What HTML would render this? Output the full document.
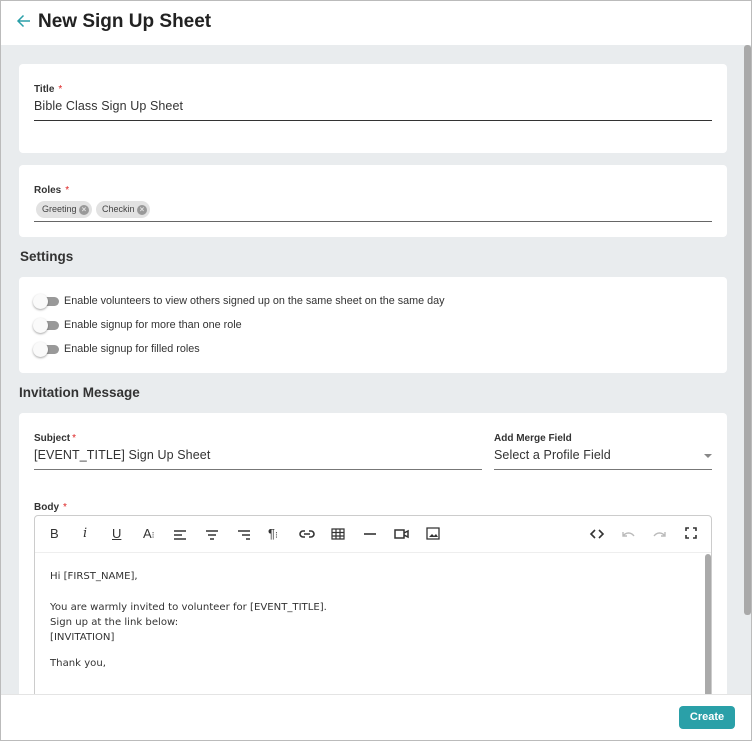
<!DOCTYPE html>
<html><head><meta charset="utf-8"><style>
*{box-sizing:border-box;margin:0;padding:0}
body{width:752px;height:741px;overflow:hidden;font-family:"Liberation Sans",Arial,sans-serif;color:#222;background:#fff}
.frame{position:absolute;left:0;top:0;width:752px;height:741px;background:#e9ecee;overflow:hidden}
.abs{position:absolute}
.card{position:absolute;left:19px;width:708px;background:#fff;border-radius:4px}
.lbl{position:absolute;font-size:10px;font-weight:bold;color:#333}
.req{color:#d22;font-weight:normal;margin-left:4px}
.val{position:absolute;font-size:12.5px;color:#333;letter-spacing:0.1px}
.line{position:absolute;height:1px;background:#333}
.h{position:absolute;font-size:13.5px;font-weight:bold;color:#333}
.chip{position:absolute;top:36px;height:17px;border-radius:9px;background:#e2e2e2;font-size:9px;color:#444;line-height:17px;padding-left:6px}
.chip i{position:absolute;right:3px;top:3.5px;width:10px;height:10px;border-radius:50%;background:#999;color:#e2e2e2;font-style:normal;font-size:8px;line-height:10px;text-align:center;font-weight:bold}
.tg{position:absolute;left:14px;width:28px}
.tg .tr{position:absolute;left:6px;top:3px;width:20px;height:9px;border-radius:5px;background:#999}
.tg .kn{position:absolute;left:0;top:0;width:15px;height:15px;border-radius:50%;background:#fafafa;box-shadow:0 1px 2px rgba(0,0,0,.35)}
.tt{position:absolute;left:45px;font-size:10.8px;color:#333}
.ic{position:absolute;top:10px;font-size:13px;color:#333}
.msg{position:absolute;left:15px;font-family:"DejaVu Sans",Verdana,sans-serif;font-size:10.1px;color:#333}
</style></head><body><div class="frame">
<div class="abs" style="left:0;top:0;width:752px;height:45px;background:#fff"></div>
<svg class="abs" style="left:16px;top:13px" width="16" height="16" viewBox="0 0 16 16"><path d="M14 8H2M7.5 2.5L2 8l5.5 5.5" fill="none" stroke="#2a9fa8" stroke-width="1.5"/></svg>
<div class="abs" style="left:38px;top:11px;font-size:19px;font-weight:bold;color:#222">New Sign Up Sheet</div>
<div class="abs" style="left:744px;top:45px;width:7px;height:570px;background:#a9a9a9;border-radius:3px"></div>

<div class="card" style="top:64px;height:89px">
 <div class="lbl" style="left:15px;top:20px">Title<span class="req">*</span></div>
 <div class="val" style="left:15px;top:35px">Bible Class Sign Up Sheet</div>
 <div class="line" style="left:15px;top:56px;width:678px"></div>
</div>
<div class="card" style="top:165px;height:72px">
 <div class="lbl" style="left:15px;top:20px">Roles<span class="req">*</span></div>
 <div class="chip" style="left:17px;top:36px;width:56px">Greeting<i>×</i></div>
 <div class="chip" style="left:77px;top:36px;width:54px">Checkin<i>×</i></div>
 <div class="line" style="left:15px;top:56px;width:678px;background:#666"></div>
</div>
<div class="h" style="left:20px;top:249px">Settings</div>
<div class="card" style="top:277px;height:96px">
 <div class="tg" style="top:17px"><div class="tr"></div><div class="kn"></div></div><div class="tt" style="top:18px">Enable volunteers to view others signed up on the same sheet on the same day</div>
 <div class="tg" style="top:41px"><div class="tr"></div><div class="kn"></div></div><div class="tt" style="top:42px">Enable signup for more than one role</div>
 <div class="tg" style="top:65px"><div class="tr"></div><div class="kn"></div></div><div class="tt" style="top:66px">Enable signup for filled roles</div>
</div>
<div class="h" style="left:19px;top:385px">Invitation Message</div>
<div class="card" style="top:413px;height:300px">
 <div class="lbl" style="left:15px;top:20px">Subject<span class="req" style="margin-left:2px">*</span></div>
 <div class="val" style="left:15px;top:35px">[EVENT_TITLE] Sign Up Sheet</div>
 <div class="line" style="left:15px;top:56px;width:448px;background:#777"></div>
 <div class="lbl" style="left:475px;top:20px">Add Merge Field</div>
 <div class="val" style="left:475px;top:35px">Select a Profile Field</div>
 <div class="abs" style="left:685px;top:41px;width:0;height:0;border-left:4px solid transparent;border-right:4px solid transparent;border-top:4px solid #888"></div>
 <div class="line" style="left:475px;top:56px;width:218px;background:#777"></div>
 <div class="lbl" style="left:15px;top:89px">Body<span class="req">*</span></div>
 <div class="abs" style="left:15px;top:102px;width:678px;height:220px;border:1px solid #ccc;border-radius:4px">
  <div class="ic" style="left:15px">B</div>
  <div class="ic" style="left:48px;font-style:italic;font-family:'DejaVu Serif',serif">i</div>
  <div class="ic" style="left:77px;text-decoration:underline">U</div>
  <div class="ic" style="left:108px">A<span style="font-size:9px">⁝</span></div>
  <svg class="abs" style="left:138px;top:13px" width="14" height="12"><path d="M1 2h12M1 6h8M1 10h12" stroke="#333" stroke-width="1.4"/></svg>
  <svg class="abs" style="left:170px;top:13px" width="14" height="12"><path d="M1 2h12M3 6h8M5 10h4" stroke="#333" stroke-width="1.4"/></svg>
  <svg class="abs" style="left:202px;top:13px" width="14" height="12"><path d="M1 2h12M5 6h8M9 10h4" stroke="#333" stroke-width="1.4"/></svg>
  <div class="ic" style="left:233px">¶<span style="font-size:9px">⁝</span></div>
  <svg class="abs" style="left:264px;top:12px" width="16" height="12"><path d="M6 3H4a3 3 0 0 0 0 6h2M10 3h2a3 3 0 0 1 0 6h-2M5 6h6" fill="none" stroke="#333" stroke-width="1.6"/></svg>
  <svg class="abs" style="left:296px;top:12px" width="14" height="12"><path d="M1 1h12v10H1zM1 4.5h12M1 8h12M5 1v10M9 1v10" fill="none" stroke="#333" stroke-width="1.2"/></svg>
  <svg class="abs" style="left:328px;top:12px" width="14" height="12"><path d="M1 6h12" stroke="#333" stroke-width="1.6"/></svg>
  <svg class="abs" style="left:359px;top:12px" width="16" height="12"><path d="M1 2h9v8H1zM10 5l4-2v6l-4-2z" fill="none" stroke="#333" stroke-width="1.5"/></svg>
  <svg class="abs" style="left:391px;top:11px" width="14" height="13"><path d="M1 1h12v11H1z" fill="none" stroke="#333" stroke-width="1.3"/><path d="M3 10l3-3 2 2 2-2 2 3z" fill="#333"/></svg>
  <svg class="abs" style="left:554px;top:12px" width="16" height="12"><path d="M6 2L2 6l4 4M10 2l4 4-4 4" fill="none" stroke="#333" stroke-width="1.6"/></svg>
  <svg class="abs" style="left:586px;top:13px" width="14" height="10"><path d="M2 3v4h4M2 7c3-4 8-4 11 0" fill="none" stroke="#bbb" stroke-width="1.4"/></svg>
  <svg class="abs" style="left:618px;top:13px" width="14" height="10"><path d="M12 3v4H8M12 7C9 3 4 3 1 7" fill="none" stroke="#bbb" stroke-width="1.4"/></svg>
  <svg class="abs" style="left:650px;top:11px" width="12" height="12"><path d="M1 4V1h3M8 1h3v3M11 8v3H8M4 11H1V8" fill="none" stroke="#333" stroke-width="1.6"/></svg>
  <div class="abs" style="left:0;top:36px;width:676px;height:1px;background:#eee"></div>
  <div class="msg" style="top:55px">Hi [FIRST_NAME],</div>
  <div class="msg" style="top:84px;line-height:15px">You are warmly invited to volunteer for [EVENT_TITLE].<br>Sign up at the link below:<br>[INVITATION]</div>
  <div class="msg" style="top:142px">Thank you,</div>
  <div class="abs" style="left:670px;top:38px;width:6px;height:180px;background:#aaa;border-radius:3px"></div>
 </div>
</div>
<div class="abs" style="left:0;top:694px;width:752px;height:47px;background:#fff;border-top:1px solid #e4e4e4"></div>
<div class="abs" style="left:679px;top:706px;width:56px;height:23px;background:#2aa0a8;border-radius:4px;color:#fff;font-size:11px;font-weight:bold;text-align:center;line-height:23px">Create</div>
<div class="abs" style="left:0;top:0;width:752px;height:741px;border:1px solid #bbb"></div>
</div></body></html>
